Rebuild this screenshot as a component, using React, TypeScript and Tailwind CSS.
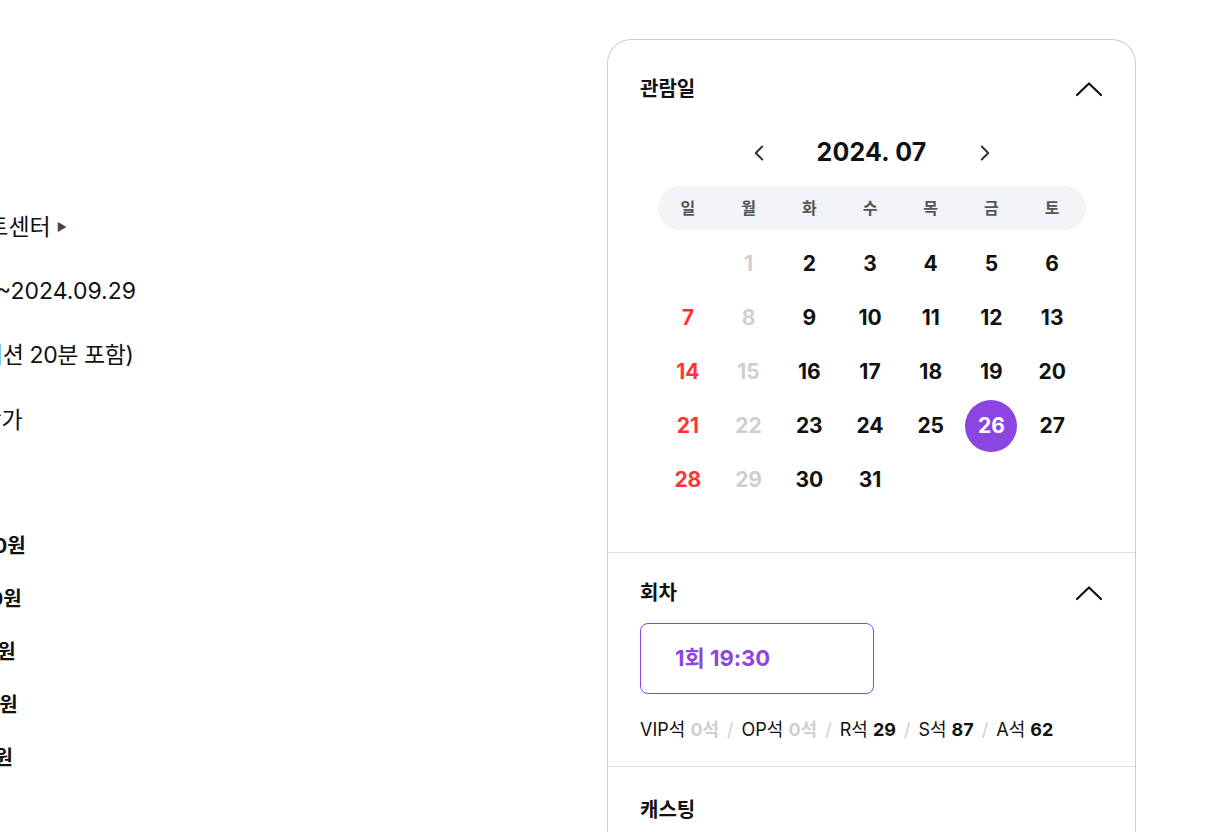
import { ChevronLeft, ChevronRight } from 'lucide-react';

const FONT = "font-['Inter','Noto_Sans_CJK_KR',sans-serif]";

const WEEKDAYS = ['일', '월', '화', '수', '목', '금', '토'];

// first of July 2024 is a Monday
const CELLS: (number | null)[] = [null, ...Array.from({ length: 31 }, (_, i) => i + 1)];

const PRICES = [
  { grade: 'VIP석', price: '190,000원' },
  { grade: 'OP석', price: '190,000원' },
  { grade: 'R석', price: '170,000원' },
  { grade: 'S석', price: '140,000원' },
  { grade: 'A석', price: '110,000원' },
];

function ChevronUp() {
  return (
    <svg width="28" height="16" viewBox="0 0 28 16" fill="none">
      <path d="M2 14 L14 2.5 L26 14" stroke="#111" strokeWidth="2.2" strokeLinecap="round" strokeLinejoin="round" />
    </svg>
  );
}

function DayCell({ day, col }: { day: number | null; col: number }) {
  if (day === null) return <div className="h-[54px]" />;
  const selected = day === 26;
  let color = 'text-[#111]';
  if (col === 0) color = 'text-[#ff3434]';
  else if (col === 1) color = 'text-[#cfcfcf]';
  return (
    <div className="h-[54px] flex items-center justify-center">
      {selected ? (
        <span className="w-[52px] h-[52px] rounded-full bg-[#8b45e3] text-white flex items-center justify-center text-[21px] font-bold">
          {day}
        </span>
      ) : (
        <span className={`text-[21px] font-bold ${color}`}>{day}</span>
      )}
    </div>
  );
}

function InfoPanel() {
  return (
    <div className="flex-1 min-w-0 overflow-hidden">
      <div className="-ml-[246px] pt-[195px] text-[#111]">
        <dl className="grid grid-cols-[121px_1fr] text-[23px]">
          <dt className="h-[64px] leading-[64px] text-[#666]">장소</dt>
          <dd className="h-[64px] flex items-center whitespace-nowrap">
            서울 충무아트센터
            <span className="ml-[6px] text-[11px] text-[#444]">▶</span>
          </dd>
          <dt className="h-[64px] leading-[64px] text-[#666]">공연기간</dt>
          <dd className="h-[64px] leading-[64px] whitespace-nowrap">2024.07.02~2024.09.29</dd>
          <dt className="h-[65px] leading-[65px] text-[#666]">공연시간</dt>
          <dd className="h-[65px] leading-[65px] whitespace-nowrap tracking-[-0.4px]">150분(인터미션 20분 포함)</dd>
          <dt className="h-[64px] leading-[64px] text-[#666]">관람연령</dt>
          <dd className="h-[64px] leading-[64px] whitespace-nowrap">8세이상 관람가</dd>
        </dl>
        <div className="grid grid-cols-[121px_1fr] mt-[68px]">
          <div className="text-[23px] text-[#666] leading-[53px]">가격</div>
          <ul className="text-[20px] font-bold -ml-[4px]">
            {PRICES.map((p) => (
              <li key={p.grade} className="h-[53px] leading-[53px] whitespace-nowrap">
                <span className="inline-block min-w-[42px] font-normal">{p.grade}</span> {p.price}
              </li>
            ))}
          </ul>
        </div>
      </div>
    </div>
  );
}

function Calendar() {
  return (
    <div className="w-[428px] mx-auto">
      <div className="flex items-center justify-center h-[32px] mt-[35px]">
        <button className="w-[30px] h-[30px] flex items-center justify-center text-[#333]">
          <ChevronLeft size={26} strokeWidth={1.8} />
        </button>
        <div className="w-[196px] text-center text-[25px] font-bold text-[#111] tracking-[0.2px]">2024. 07</div>
        <button className="w-[30px] h-[30px] flex items-center justify-center text-[#333]">
          <ChevronRight size={26} strokeWidth={1.8} />
        </button>
      </div>
      <div className="mt-[17px] h-[44px] rounded-full bg-[#f3f4f7]">
        <div className="w-[425px] grid grid-cols-7 h-full items-center">
          {WEEKDAYS.map((d) => (
            <div key={d} className="text-center text-[16px] font-semibold text-[#555]">
              {d}
            </div>
          ))}
        </div>
      </div>
      <div className="w-[425px] grid grid-cols-7 mt-[7px]">
        {CELLS.map((day, i) => (
          <DayCell key={i} day={day} col={i % 7} />
        ))}
      </div>
    </div>
  );
}

function SeatLine() {
  const items = [
    { g: 'VIP석', n: '0석', empty: true },
    { g: 'OP석', n: '0석', empty: true },
    { g: 'R석', n: '29', empty: false },
    { g: 'S석', n: '87', empty: false },
    { g: 'A석', n: '62', empty: false },
  ];
  return (
    <div className="mt-[22px] text-[18px] text-[#111] whitespace-nowrap">
      {items.map((it, i) => (
        <span key={it.g}>
          {i > 0 && <span className="text-[#d0d0d0] mx-[8px]">/</span>}
          {it.g}{' '}
          <span className={`font-bold ${it.empty ? 'text-[#cfcfcf]' : 'text-[#111]'}`}>{it.n}</span>
        </span>
      ))}
    </div>
  );
}

export default function App() {
  return (
    <div className={`${FONT} w-[1214px] h-[832px] overflow-hidden bg-white flex`}>
      <InfoPanel />
      <div className="w-[529px] mr-[78px] mt-[39px] border border-[#c8cdd5] rounded-t-[24px] border-b-0 self-start">
        {/* 관람일 */}
        <section className="px-[32px] pt-[36px] pb-[45px] border-b border-[#dcdfe4]">
          <div className="flex items-center justify-between h-[26px]">
            <h3 className="text-[20px] font-bold text-[#111]">관람일</h3>
            <ChevronUp />
          </div>
          <Calendar />
        </section>
        {/* 회차 */}
        <section className="px-[32px] pt-[27px] pb-[23px] border-b border-[#dcdfe4]">
          <div className="flex items-center justify-between h-[26px]">
            <h3 className="text-[20px] font-bold text-[#111]">회차</h3>
            <ChevronUp />
          </div>
          <button className="mt-[17px] w-[234px] h-[71px] rounded-[8px] border border-[#8b45e3] text-left pl-[34px] text-[22px] font-bold text-[#8b45e3]">
            1회 19:30
          </button>
          <SeatLine />
        </section>
        {/* 캐스팅 */}
        <section className="px-[32px] pt-[30px] pb-[40px]">
          <div className="flex items-center justify-between h-[26px]">
            <h3 className="text-[20px] font-bold text-[#111]">캐스팅</h3>
          </div>
        </section>
      </div>
    </div>
  );
}
